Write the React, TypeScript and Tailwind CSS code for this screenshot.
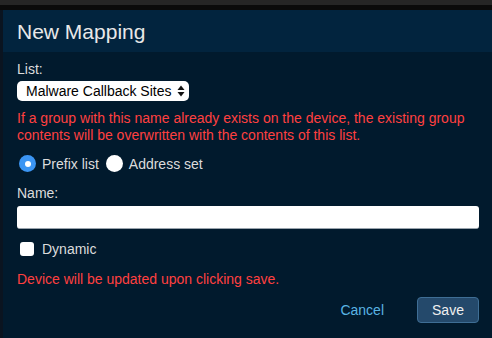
export default function App() {
  return (
    <div className="w-[492px] h-[338px] overflow-hidden bg-[#011a2d] font-['Liberation_Sans',Arial,sans-serif]">
      <div className="h-[5px] bg-[#262626]" />
      <div className="h-[5px] bg-[#0b0b0b]" />
      <div className="flex h-[328px] border-l-[3px] border-[#0a1420]">
        <div className="flex-1 flex flex-col">
          <div className="h-[42px] bg-[#02243e] flex items-center pl-[14px]">
            <h2 className="text-[21px] leading-6 text-[#e8e8e8] mt-[1px]">New Mapping</h2>
          </div>
          <div className="flex flex-col pl-[14px] pr-[13px] pt-[9px] text-[14px] leading-4">
            <label className="text-[#dcdcdc]">List:</label>
            <div className="mt-[4px] w-[172px] h-[20px] bg-white rounded-[5px] flex items-center justify-between pl-[9px] pr-[4px] text-black">
              <span>Malware Callback Sites</span>
              <svg width="8" height="12" viewBox="0 0 8 12">
                <path d="M4 0.5 L7.5 5 H0.5 Z" fill="#111" />
                <path d="M4 11.5 L7.5 7 H0.5 Z" fill="#111" />
              </svg>
            </div>
            <p className="mt-[9px] text-[#ff4040] leading-[17px]">
              If a group with this name already exists on the device, the existing group contents will be overwritten with the contents of this list.
            </p>
            <div className="mt-[11px] flex items-center text-[#dcdcdc]">
              <span className="ml-[2px] w-[17px] h-[17px] rounded-full bg-[#3b95f3] flex items-center justify-center">
                <span className="w-[6px] h-[6px] rounded-full bg-white" />
              </span>
              <span className="ml-[6px]">Prefix list</span>
              <span className="ml-[7px] w-[17px] h-[17px] rounded-full bg-white" />
              <span className="ml-[6px]">Address set</span>
            </div>
            <label className="mt-[13px] text-[#dcdcdc]">Name:</label>
            <div className="mt-[5px] h-[23px] bg-white rounded-[3px] border-b border-[#9aa4ad]" />
            <div className="mt-[12px] flex items-center text-[#dcdcdc]">
              <span className="ml-[3px] w-[14px] h-[14px] rounded-[3px] bg-white" />
              <span className="ml-[8px]">Dynamic</span>
            </div>
            <p className="mt-[14px] text-[#ff4040]">Device will be updated upon clicking save.</p>
            <div className="mt-[10px] flex items-center justify-end">
              <button className="text-[#5ab4e4] text-[14px] mr-[33px]">Cancel</button>
              <button className="w-[62px] h-[26px] rounded-[4px] bg-[#24496b] border border-[#3f6e95] text-[#f0f0f0] text-[14px]">
                Save
              </button>
            </div>
          </div>
        </div>
      </div>
    </div>
  );
}
